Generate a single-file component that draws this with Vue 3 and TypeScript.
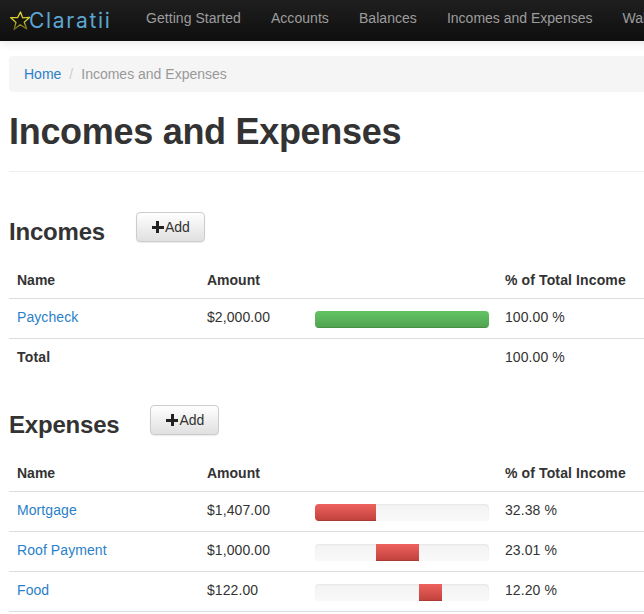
<script setup lang="ts">
interface Row { name: string; amount: string; pct: string; offset: number; width: number }
const navItems: string[] = ['Getting Started', 'Accounts', 'Balances', 'Incomes and Expenses', 'Wallets']
const incomes: Row[] = [{ name: 'Paycheck', amount: '$2,000.00', pct: '100.00 %', offset: 0, width: 100 }]
const expenses: Row[] = [
  { name: 'Mortgage', amount: '$1,407.00', pct: '32.38 %', offset: 0, width: 35 },
  { name: 'Roof Payment', amount: '$1,000.00', pct: '23.01 %', offset: 35, width: 24.7 },
  { name: 'Food', amount: '$122.00', pct: '12.20 %', offset: 59.7, width: 13.3 },
]
</script>

<template>
  <div class="page">
    <nav class="navbar">
      <a class="brand">
        <svg class="star" width="21" height="21" viewBox="0 0 21 21">
          <defs>
            <linearGradient id="starStroke" x1="0" y1="0" x2="0" y2="1">
              <stop offset="0" stop-color="#e4dc3a" />
              <stop offset="0.55" stop-color="#c9c22c" />
              <stop offset="1" stop-color="#5f5c1c" />
            </linearGradient>
          </defs>
          <path d="M10.5 1 L12.6 6.8 L19.5 6.4 L14.2 11.2 L16.8 18 L10.2 13.8 L4 18.6 L6 11.4 L0.6 6.6 L7.6 6.6 Z" fill="#15140c" stroke="url(#starStroke)" stroke-width="1.3" stroke-linejoin="round" />
        </svg>
        <span class="brand-text">Claratii</span>
      </a>
      <ul class="nav">
        <li v-for="item in navItems" :key="item">{{ item }}</li>
      </ul>
    </nav>

    <main class="container">
      <ol class="breadcrumb">
        <li><a href="#">Home</a></li>
        <li class="sep">/</li>
        <li class="active">Incomes and Expenses</li>
      </ol>

      <h1>Incomes and Expenses</h1>
      <hr />

      <div class="section-head first">
        <h2>Incomes</h2>
        <button class="btn"><span class="plus"></span>Add</button>
      </div>
      <table>
        <colgroup><col class="c1" /><col class="c2" /><col class="c3" /><col /></colgroup>
        <thead>
          <tr><th>Name</th><th>Amount</th><th></th><th class="wide">% of Total Income</th></tr>
        </thead>
        <tbody>
          <tr v-for="r in incomes" :key="r.name">
            <td><a href="#">{{ r.name }}</a></td>
            <td>{{ r.amount }}</td>
            <td>
              <div class="progress">
                <div class="bar green" :style="{ marginLeft: r.offset + '%', width: r.width + '%' }"></div>
              </div>
            </td>
            <td>{{ r.pct }}</td>
          </tr>
          <tr class="total">
            <td>Total</td><td></td><td></td><td>100.00 %</td>
          </tr>
        </tbody>
      </table>

      <div class="section-head second">
        <h2>Expenses</h2>
        <button class="btn"><span class="plus"></span>Add</button>
      </div>
      <table>
        <colgroup><col class="c1" /><col class="c2" /><col class="c3" /><col /></colgroup>
        <thead>
          <tr><th>Name</th><th>Amount</th><th></th><th class="wide">% of Total Income</th></tr>
        </thead>
        <tbody>
          <tr v-for="r in expenses" :key="r.name">
            <td><a href="#">{{ r.name }}</a></td>
            <td>{{ r.amount }}</td>
            <td>
              <div class="progress">
                <div class="bar red" :style="{ marginLeft: r.offset + '%', width: r.width + '%' }"></div>
              </div>
            </td>
            <td>{{ r.pct }}</td>
          </tr>
        </tbody>
      </table>
    </main>
  </div>
</template>

<style>
html, body { margin: 0; overflow: hidden; background: #fff; }
</style>

<style scoped>
.page {
  width: 1000px;
  font-family: "Liberation Sans", Arial, sans-serif;
  font-size: 14px;
  line-height: 20px;
  color: #333;
}
.navbar {
  display: flex;
  height: 41px;
  background: linear-gradient(to bottom, #1f1f1f, #0e0e0e);
  box-shadow: 0 1px 10px rgba(0, 0, 0, 0.12);
}
.brand { display: flex; align-items: center; width: 131px; padding-left: 10px; box-sizing: border-box; }
.star { flex: none; margin-top: 1px; }
.brand-text {
  margin-left: -2px;
  font-family: Inter, sans-serif;
  font-size: 21px;
  letter-spacing: 1.7px;
  color: #5ba6d2;
}
.nav { display: flex; list-style: none; margin: 0; padding: 0; }
.nav li { padding: 8px 15px 13px; color: #9d9d9d; white-space: nowrap; letter-spacing: 0.05px; }
.nav li:nth-child(4) { letter-spacing: 0; }
.container { padding: 15px 0 0 9px; }
.breadcrumb {
  display: flex;
  list-style: none;
  margin: 0;
  padding: 8px 15px;
  background: #f5f5f5;
  border-radius: 4px;
}
.breadcrumb a, td a { color: #2a7fc9; text-decoration: none; }
.sep { color: #ccc; padding: 0 8px; }
.active { color: #999; }
h1 { margin: 20px 0 0; font-size: 36px; line-height: 40px; font-weight: 700; letter-spacing: -0.3px; }
hr { margin: 19px 0 0; border: 0; border-top: 1px solid #eee; }
.section-head { display: flex; align-items: flex-start; }
.section-head.first { margin-top: 40px; height: 50px; }
.section-head.second { margin-top: 27px; height: 50px; }
h2 { margin: 6px 0 0; font-size: 24px; line-height: 28px; font-weight: 700; letter-spacing: -0.2px; }
.btn {
  display: flex;
  align-items: center;
  height: 30px;
  margin-left: 31px;
  padding: 0 14px 0 15px;
  font: inherit;
  color: #333;
  background: linear-gradient(to bottom, #fff, #e0e0e0);
  border: 1px solid #ccc;
  border-radius: 4px;
  box-shadow: 0 1px 1px rgba(0, 0, 0, 0.08);
}
.plus {
  width: 12px;
  height: 12px;
  margin-right: 1px;
  background:
    linear-gradient(#222, #222) center / 12px 3px no-repeat,
    linear-gradient(#222, #222) center / 3px 12px no-repeat;
}
table { width: 100%; table-layout: fixed; border-collapse: collapse; }
.c1 { width: 190px; }
.c2 { width: 108px; }
.c3 { width: 190px; }
th {
  padding: 8px;
  text-align: left;
  font-weight: 700;
  border-bottom: 1px solid #ddd;
}
.wide { letter-spacing: 0.12px; }
td { padding: 8px 8px 11px; vertical-align: top; border-bottom: 1px solid #ddd; letter-spacing: 0.08px; }
.total td { font-weight: 700; border-bottom: 0; letter-spacing: 0.2px; }
.total td:last-child { font-weight: 400; letter-spacing: 0.08px; }
.progress {
  display: flex;
  height: 17px;
  margin: 4px 0 -1px;
  overflow: hidden;
  background: linear-gradient(to bottom, #f3f3f3, #f9f9f9);
  border-radius: 4px;
  box-shadow: inset 0 1px 2px rgba(0, 0, 0, 0.06);
}
.bar { height: 100%; box-shadow: inset 0 -1px 0 rgba(0, 0, 0, 0.12); }
.green { background-image: linear-gradient(to bottom, #62c462, #51a351); }
.red { background-image: linear-gradient(to bottom, #ef625e, #c0413b); }
</style>
